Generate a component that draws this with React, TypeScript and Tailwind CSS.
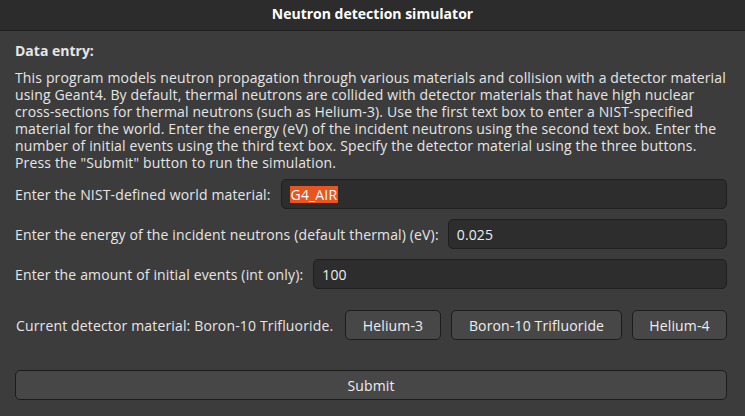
import React from "react";

const lines = [
  "This program models neutron propagation through various materials and collision with a detector material",
  "using Geant4. By default, thermal neutrons are collided with detector materials that have high nuclear",
  "cross-sections for thermal neutrons (such as Helium-3). Use the first text box to enter a NIST-specified",
  "material for the world. Enter the energy (eV) of the incident neutrons using the second text box. Enter the",
  "number of initial events using the third text box. Specify the detector material using the three buttons.",
  'Press the "Submit" button to run the simulation.',
];

function Field({ children }: { children: React.ReactNode }) {
  return (
    <div className="flex-1 h-[30px] rounded-[5px] border border-[#1f1f1f] bg-[#2d2d2d] flex items-center pl-[8px] text-[#eeeeee]">
      {children}
    </div>
  );
}

function Btn({ label, w }: { label: string; w: string }) {
  return (
    <div className={`${w} h-[30px] rounded-[5px] border border-[#1c1c1c] bg-[#474747] flex items-center justify-center text-[#eeeeee]`}>
      {label}
    </div>
  );
}

export default function App() {
  return (
    <div
      className="w-[745px] h-[416px] bg-[#3c3c3c] text-[#e6e6e6] text-[14px] leading-[17px] tracking-[0.15px] flex flex-col overflow-hidden"
      style={{ fontFamily: "'Open Sans', 'Noto Sans', sans-serif" }}
    >
      <div className="h-[31px] shrink-0 bg-[#2c2c2c] border-b border-[#1e1e1e] flex items-center justify-center pb-[3px] font-bold text-white text-[14px] tracking-normal">
        Neutron detection simulator
      </div>
      <div className="flex flex-col px-[15px] pr-[18px] pt-[11px]">
        <div className="font-bold h-[17px] tracking-normal">Data entry:</div>
        <div className="mt-[10px] flex flex-col">
          {lines.map((l, i) => (
            <div key={i} className="whitespace-nowrap h-[17px]">{l}</div>
          ))}
        </div>
        <div className="mt-[8px] flex items-center gap-[10px]">
          <span>Enter the NIST-defined world material:</span>
          <Field>
            <span className="bg-[#e95420] text-white px-[1px] leading-[17px]">G4_AIR</span>
          </Field>
        </div>
        <div className="mt-[10px] flex items-center gap-[9px]">
          <span>Enter the energy of the incident neutrons (default thermal) (eV):</span>
          <Field>0.025</Field>
        </div>
        <div className="mt-[10px] flex items-center gap-[10px]">
          <span>Enter the amount of initial events (int only):</span>
          <Field>100</Field>
        </div>
        <div className="mt-[21px] flex items-center">
          <span className="flex-1 pl-[1px]">Current detector material: Boron-10 Trifluoride.</span>
          <div className="flex gap-[10px]">
            <Btn label="Helium-3" w="w-[96px]" />
            <Btn label="Boron-10 Trifluoride" w="w-[171px]" />
            <Btn label="Helium-4" w="w-[95px]" />
          </div>
        </div>
        <div className="mt-[30px] h-[30px] rounded-[5px] border border-[#1c1c1c] bg-[#474747] flex items-center justify-center text-[#eeeeee]">
          Submit
        </div>
      </div>
    </div>
  );
}
